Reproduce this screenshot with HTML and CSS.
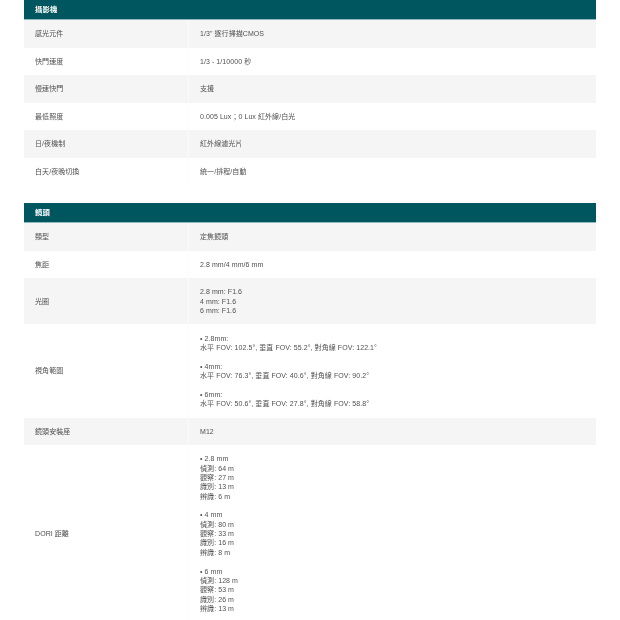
FILE: index.html
```html
<!DOCTYPE html>
<html lang="zh-Hant">
<head>
<meta charset="utf-8">
<title>規格</title>
<link rel="stylesheet" href="styles.css">
</head>
<body>
<div class="page">
<table class="spec">
<colgroup><col class="c1"><col class="c2"></colgroup>
<thead><tr><th colspan="2">攝影機</th></tr></thead>
<tbody>
<tr><td>感光元件</td><td>1/3" 逐行掃描CMOS</td></tr>
<tr><td>快門速度</td><td>1/3 - 1/10000 秒</td></tr>
<tr><td>慢速快門</td><td>支援</td></tr>
<tr><td>最低照度</td><td>0.005 Lux；0 Lux 紅外線/白光</td></tr>
<tr><td>日/夜機制</td><td>紅外線濾光片</td></tr>
<tr><td>白天/夜晚切換</td><td>統一/排程/自動</td></tr>
</tbody>
</table>
<table class="spec">
<colgroup><col class="c1"><col class="c2"></colgroup>
<thead><tr><th colspan="2">鏡頭</th></tr></thead>
<tbody>
<tr><td>類型</td><td>定焦鏡頭</td></tr>
<tr><td>焦距</td><td>2.8 mm/4 mm/6 mm</td></tr>
<tr><td>光圈</td><td>2.8 mm: F1.6<br>4 mm: F1.6<br>6 mm: F1.6</td></tr>
<tr><td>視角範圍</td><td>• 2.8mm:<br>水平 FOV: 102.5°, 垂直 FOV: 55.2°, 對角線 FOV: 122.1°<br><br>• 4mm:<br>水平 FOV: 76.3°, 垂直 FOV: 40.6°, 對角線 FOV: 90.2°<br><br>• 6mm:<br>水平 FOV: 50.6°, 垂直 FOV: 27.8°, 對角線 FOV: 58.8°</td></tr>
<tr><td>鏡頭安裝座</td><td>M12</td></tr>
<tr><td>DORI 距離</td><td>• 2.8 mm<br>偵測: 64 m<br>觀察: 27 m<br>識別: 13 m<br>辨識: 6 m<br><br>• 4 mm<br>偵測: 80 m<br>觀察: 33 m<br>識別: 16 m<br>辨識: 8 m<br><br>• 6 mm<br>偵測: 128 m<br>觀察: 53 m<br>識別: 26 m<br>辨識: 13 m</td></tr>
</tbody>
</table>
</div>
</body>
</html>
```
FILE: styles.css
```css
html, body {
  margin: 0;
  padding: 0;
  background: #fff;
  height: 620px;
  overflow: hidden;
}
.page {
  padding: 0 24px;
  display: flex;
  flex-direction: column;
  gap: 17.5px;
  font-family: "Liberation Sans", "Noto Sans CJK TC", sans-serif;
  font-size: 7px;
  line-height: 9.36px;
  letter-spacing: 0.07px;
  color: #505050;
  filter: blur(0.4px);
}
.spec {
  width: 572px;
  border-collapse: separate;
  border-spacing: 0;
  table-layout: fixed;
}
.c1 { width: 165px; }
.spec th {
  background: #00565f;
  color: #fff;
  text-align: left;
  font-size: 7.4px;
  font-weight: 700;
  padding: 0 11px;
  height: 20px;
  box-sizing: border-box;
  border-bottom: 1px solid #8fb9bd;
}
.spec td {
  padding: 9.12px 11px;
  vertical-align: middle;
  border-right: 1px solid #fbfbfb;
}
.spec td:last-child { border-right: 0; }
.spec tbody tr:nth-child(odd) { background: #f5f5f5; }
```
